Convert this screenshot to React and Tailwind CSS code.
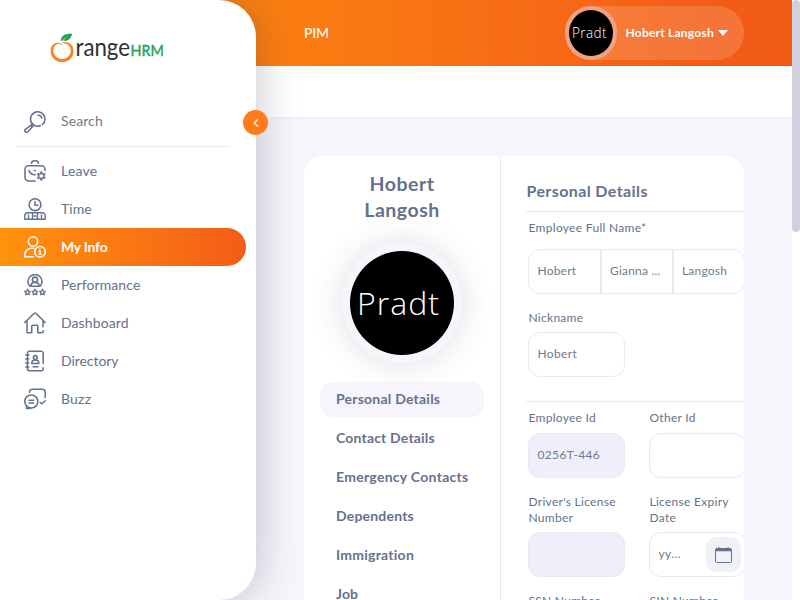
import React from "react";

const icons = {
  search: (
    <>
      <path d="M18.300 13.600A7.200 7.200 0 1 0 16.200 14.800" />
      <path d="M14 4.200a3.800 3.800 0 0 1 3.800 2.800" />
      <path d="M8.700 12.800 1.400 18.300a1.700 1.700 0 0 0 2.500 2.500L9.800 14.200M6.500 14.500l1.600 1.600" />
    </>
  ),
  leave: (
    <>
      <path d="M7.500 3.200C7.500.8 9 .8 11 .8s3.500 0 3.500 2.400" />
      <path d="M21 10.500V9.300a3.500 3.500 0 0 0-3.500-3.500h-13A3.500 3.500 0 0 0 1 9.300v8.200A3.500 3.500 0 0 0 4.500 21H11" />
      <path d="M5 10.500c.8 2.800 3 4.300 6.200 4.300M10.500 10.500h.8" />
      <path d="m17.300 12 1.200 2 2.300-.1-1.100 2.100 1.100 2.100-2.300-.1-1.200 2-1.200-2-2.300.1 1.100-2.100-1.100-2.100 2.300.1z" />
    </>
  ),
  time: (
    <>
      <circle cx="11" cy="6.700" r="5.900" />
      <path d="M11 3.500v3.700h3" />
      <path d="M.8 21.200v-3.500a3 3 0 0 1 3-3h14.400a3 3 0 0 1 3 3v3.500zM4.500 17v4M8.500 15v6M13.500 15v6M17.500 17v4M10 18h2" strokeWidth="1.400" />
    </>
  ),
  info: (
    <>
      <circle cx="9" cy="5.500" r="4.700" />
      <path d="M9.500 20.800H.8v-2a6.600 6.600 0 0 1 6.600-6.600h2.400" />
      <circle cx="16" cy="15.700" r="5.300" />
      <path d="M15 14.900h1.200v3.500M15.200 18.400h2M16 12.600v.2" strokeWidth="1.300" />
    </>
  ),
  performance: (
    <>
      <path d="M5.800 12.200a7 7 0 1 1 10.400 0z" />
      <circle cx="11" cy="5.700" r="2.600" />
      <path d="M6.800 12c.3-4.600 8.100-4.600 8.400 0" />
      <path d="m3.500 15.300.9 1.800 1.900.2-1.400 1.400.4 2-1.800-.9-1.800.9.300-2-1.300-1.400 2-.2zM11 15.300l.9 1.800 1.900.2-1.400 1.400.4 2-1.800-.9-1.800.9.300-2-1.300-1.400 2-.2zM18.500 15.300l.9 1.800 1.900.2-1.400 1.400.4 2-1.800-.9-1.800.9.300-2-1.300-1.400 2-.2z" strokeWidth="1.300" />
    </>
  ),
  dashboard: (
    <>
      <path d="M.8 10.500 10.200 1.300a1.100 1.100 0 0 1 1.600 0l9.400 9.200" />
      <path d="M3 9.500v11.300h4.700v-6.500a1 1 0 0 1 1-1h4.100a1 1 0 0 1 1 1v6.500h3.600c1.200 0 1.900-.7 1.900-2M19 9.500v5.300" />
    </>
  ),
  directory: (
    <>
      <path d="M19.200 13.500V3.200a2 2 0 0 0-2-2H5.500a2 2 0 0 0-2 2v15.600a2 2 0 0 0 2 2h11.700a2 2 0 0 0 2-2v-1" />
      <path d="M1.800 5h3M1.800 9h3M1.800 13h3M1.800 17h3M9 16.800h5" />
      <circle cx="11.300" cy="7.500" r="1.900" />
      <path d="M7.800 13.400c0-4.500 7-4.500 7 0z" />
    </>
  ),
  buzz: (
    <>
      <circle cx="7.300" cy="13.500" r="6.500" />
      <path d="M2.500 17.800v2.700h4M5 12.200h4.600M5 15h4.600" />
      <path d="M5.500 4.200c0-2 1-3 3-3h9.700a3 3 0 0 1 3 3v5.300M21.200 12.800l-3.300 3-1.700-1.300" />
    </>
  ),
};

function Icon({ name }) {
  return (
    <svg className="h-[22px] w-[22px] shrink-0" viewBox="0 0 22 22" fill="none" stroke="currentColor" strokeWidth="1.55" strokeLinecap="round" strokeLinejoin="round">
      {icons[name]}
    </svg>
  );
}

const menu = [
  ["leave", "Leave", "tracking-[0.2px]"],
  ["time", "Time", "tracking-[0.05px]"],
  ["info", "My Info", "tracking-[-0.25px]"],
  ["performance", "Performance", "tracking-[0.08px]"],
  ["dashboard", "Dashboard", "tracking-[0.1px]"],
  ["directory", "Directory", "tracking-[-0.05px]"],
  ["buzz", "Buzz", "tracking-[0.2px]"],
];

function Logo() {
  return (
    <svg className="ml-[50px] mt-[32px] h-[32px] w-[116px]" viewBox="0 0 116 32">
      <path d="M13.800 14.500C12.500 11.800 9.800 10.300 7 10.700 3 11.300.600 14.900.600 19c0 6.300 5.200 11.100 11.600 11.100 6.600 0 11.400-4.900 11.400-11.200 0-4.900-3.600-9-8.700-9-1.400 0-2.500.4-3.300 1 5.200-.3 9.200 2.900 9.200 7.500 0 4.800-3.700 8.500-8.500 8.500-5 0-8.900-3.500-8.900-8.300 0-3.600 2-6.600 5.200-6.700 2.100-.1 3.900.8 5.200 2.600z" fill="#f58426" />
      <path d="M11 9.300C10.300 3.800 15 1.300 22.300 1.700 21 6.400 18 9.800 13 8.600l5-4.300-5.600 4-1 1z" fill="#23a455" />
      <text x="25.500" y="24" textLength="54.500" lengthAdjust="spacingAndGlyphs" fontFamily="Lato, sans-serif" fontSize="25" fill="#303030">range</text>
      <text x="80.500" y="24" textLength="33.500" lengthAdjust="spacingAndGlyphs" fontFamily="Lato, sans-serif" fontSize="15.500" stroke="#23a455" strokeWidth=".4" fill="#23a455">HRM</text>
    </svg>
  );
}

function Sidebar() {
  return (
    <aside className="absolute left-0 top-0 z-10 h-[600px] w-64 rounded-r-[37px] bg-white text-[14px] text-[#64728c] shadow-[4px_0_38px_rgba(40,40,65,0.24)]">
      <Logo />
      <div className="mt-[45px] flex h-[25px] items-center pl-6 text-[#76797f]">
        <span className="text-[#64728c]"><Icon name="search" /></span>
        <span className="ml-[15px] pb-[2px] tracking-[0.1px]">Search</span>
      </div>
      <div className="ml-4 mt-3 w-[214px] border-t border-[#e8eaef]" />
      <nav className="mt-[5px]">
        {menu.map(([icon, label, tracking]) => (
          <a key={icon} className={"flex h-[38px] w-[246px] items-center rounded-r-full pl-6 " + (icon === "info" ? "bg-linear-to-r from-[#ff920b] to-[#f35c17] font-bold text-white" : "")}>
            <Icon name={icon} />
            <span className={"ml-[15px] pb-[2px] " + tracking}>{label}</span>
          </a>
        ))}
      </nav>
      <button className="absolute left-[243px] top-[110px] flex h-[25px] w-[25px] items-center justify-center rounded-full bg-[#ff7b1d] text-white">
        <svg className="h-2 w-[6px]" viewBox="0 0 6 8" fill="none" stroke="currentColor" strokeWidth="1.200"><path d="M4.800.5 1.200 4l3.600 3.500" /></svg>
      </button>
    </aside>
  );
}

function Avatar({ size }) {
  return (
    <svg className={size} viewBox="0 0 104 104" preserveAspectRatio="none">
      <circle cx="52" cy="52" r="52" fill="#000" />
      <text x="7" y="64" textLength="82" lengthAdjust="spacing" fontFamily="Open Sans, sans-serif" fontWeight="300" fontSize="32" fill="#fff">Pradt</text>
    </svg>
  );
}

function Header() {
  return (
    <header className="flex h-[66px] items-center justify-between bg-linear-to-r from-[#ff920b] from-0% to-[#f35c17] to-90% pl-[304px] pr-[48px] text-white">
      <h1 className="pb-[2px] text-[14px] font-medium tracking-[-0.2px]">PIM</h1>
      <div className="flex h-[54px] w-[179px] items-center rounded-full bg-white/15">
        <span className="flex h-[54px] w-[52px] items-center justify-center rounded-full bg-[#f2a182]"><Avatar size="h-[46px] w-[44px]" /></span>
        <span className="ml-[8.500px] text-[12px] font-bold tracking-[0.22px]">Hobert Langosh</span>
        <svg className="ml-1 h-[6px] w-[10px]" viewBox="0 0 10 6"><path d="M0 0h10L5 6z" fill="currentColor" /></svg>
      </div>
    </header>
  );
}

const tabs = [
  ["Personal Details", "tracking-[0.23px]"],
  ["Contact Details", "tracking-[0.18px]"],
  ["Emergency Contacts", "tracking-[0.28px]"],
  ["Dependents", "tracking-[0.2px]"],
  ["Immigration", "tracking-[0.25px]"],
  ["Job", "tracking-[0.1px]"],
];

function Profile() {
  return (
    <section className="w-[197px] shrink-0 border-r border-[#e8eaef] px-4 pt-[15px]">
      <h2 className="text-center text-[19.500px] font-bold leading-[26px] tracking-[0.5px]">Hobert<br />Langosh</h2>
      <div className="mx-auto mt-[20px] flex h-[120px] w-[120px] items-center justify-center rounded-full bg-[#f6f5fb] shadow-[0_0_32px_rgba(50,50,75,0.16)]">
        <Avatar size="h-[104px] w-[104px]" />
      </div>
      <nav className="mt-[19px] flex flex-col gap-1">
        {tabs.map(([label, tracking], i) => (
          <a key={label} className={"flex h-[35px] items-center whitespace-nowrap rounded-[13px] px-4 pb-[2px] text-[14px] font-bold " + tracking + (i === 0 ? " bg-[#f6f5fb]" : "")}>{label}</a>
        ))}
      </nav>
    </section>
  );
}

function Field({ label, value, filled, date }) {
  return (
    <div className="w-[97px] shrink-0">
      <label className="block pl-[0.500px] text-[12px] leading-4 tracking-[0.28px]">{label}</label>
      <div className={"mt-[6px] flex h-[45px] items-center justify-between rounded-[12px] border border-[#e8eaef] pl-[8.500px] pr-1 text-[12px] tracking-[0.35px] " + (filled ? "bg-[#efeefb]" : "bg-white")}>
        <span className="pb-px text-[#6f7a8b]">{value}</span>
        {date && (
          <span className="flex h-[35px] w-[35px] items-center justify-center rounded-[10px] bg-[#eff1f6]">
            <svg className="h-[16px] w-[17px]" viewBox="0 0 17 16" fill="none" stroke="#64728c"><rect x=".5" y="1.500" width="16" height="14" rx="1" /><path d="M1 3h15" strokeWidth="2.500" /><path d="M4 0v2M13 0v2" /></svg>
          </span>
        )}
      </div>
    </div>
  );
}

function Details() {
  return (
    <section className="w-[243px] shrink-0 overflow-hidden pl-[25px] pt-[24px]">
      <h3 className="pl-[0.500px] text-[16px] font-bold leading-[22px] tracking-[0.4px]">Personal Details</h3>
      <div className="mt-[9px] border-t border-[#e8eaef]" />
      <div className="mt-2 w-[220px] pl-[2px]">
        <label className="block pl-[0.500px] text-[12px] leading-4 tracking-[0.3px]">Employee Full Name*</label>
        <div className="mt-[13px] flex h-[45px] w-[217px] rounded-[12px] border border-[#e8eaef] text-[12px] tracking-[0.2px] text-[#6f7a8b]">
          <span className="flex w-[73px] items-center border-r-2 border-[#e8eaef] pb-[2px] pl-[8.500px]">Hobert</span>
          <span className="flex w-[72px] items-center border-r-2 border-[#e8eaef] pb-[2px] pl-2">Gianna ...</span>
          <span className="flex items-center pb-[2px] pl-2">Langosh</span>
        </div>
      </div>
      <div className="mt-4 pl-[2px]"><Field label="Nickname" value="Hobert" /></div>
      <div className="mt-6 border-t border-[#e8eaef]" />
      <div className="mt-[8px] flex gap-6 pl-[2px] [&_label]:mb-[7px]">
        <Field label="Employee Id" value="0256T-446" filled />
        <Field label="Other Id" />
      </div>
      <div className="mt-4 flex gap-6 pl-[2px]">
        <Field label="Driver's License Number" filled />
        <Field label="License Expiry Date" value="yy..." date />
      </div>
      <div className="mt-4 flex gap-6 pl-[2px]">
        <Field label="SSN Number" />
        <Field label="SIN Number" />
      </div>
    </section>
  );
}

export default function App() {
  return (
    <div className="relative flex h-[600px] w-[800px] overflow-hidden bg-[#f6f5fb] font-[Lato,sans-serif] text-[#64728c]">
      <Sidebar />
      <div className="w-[792px] shrink-0">
        <Header />
        <div className="h-[51px] bg-white shadow-[0_1px_2px_rgba(100,100,140,0.06)]" />
        <main className="ml-[304px] mt-[39px] flex h-[800px] w-[440px] overflow-hidden rounded-[19px] bg-white">
          <Profile />
          <Details />
        </main>
      </div>
      <div className="w-2 bg-white"><div className="h-[232px] rounded-full bg-[#cfd2de]" /></div>
    </div>
  );
}
